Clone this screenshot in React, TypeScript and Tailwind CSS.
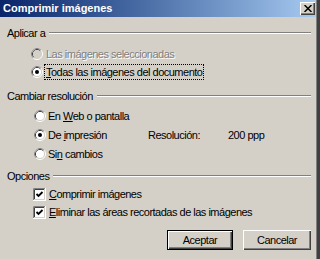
import React from 'react'

const Radio = ({ checked, disabled }: { checked?: boolean; disabled?: boolean }) => (
  <svg width="12" height="12" viewBox="0 0 12 12" className="shrink-0">
    <circle cx="6" cy="6" r="5.5" fill="none" stroke="#ffffff" />
    <path d="M2.11 9.89 A5.5 5.5 0 0 1 9.89 2.11" fill="none" stroke="#808080" />
    <circle cx="6" cy="6" r="4.5" fill="none" stroke="#d4d0c8" />
    <path d="M2.82 9.18 A4.5 4.5 0 0 1 9.18 2.82" fill="none" stroke="#404040" />
    <circle cx="6" cy="6" r="4" fill={disabled ? '#d4d0c8' : '#ffffff'} />
    {checked && <circle cx="6" cy="6" r="2" fill="#000000" />}
  </svg>
)

const Check = () => (
  <svg width="13" height="13" viewBox="0 0 13 13" className="shrink-0">
    <rect x="0" y="0" width="13" height="13" fill="#ffffff" />
    <path d="M0.5 12.5 V0.5 H12.5" fill="none" stroke="#808080" />
    <path d="M1.5 11.5 V1.5 H11.5" fill="none" stroke="#404040" />
    <path d="M12.5 0 V12.5 H0" fill="none" stroke="#ffffff" />
    <path d="M11.5 1 V11.5 H1" fill="none" stroke="#d4d0c8" />
    <path d="M3.5 6 L5.5 8 L9.5 4" fill="none" stroke="#000000" strokeWidth="1.8" />
  </svg>
)

const GroupTitle = ({ label, className }: { label: string; className: string }) => (
  <div className={`flex items-center h-[18px] pl-[7px] ${className}`}>
    <span>{label}</span>
    <div className="flex-1 ml-[4px] border-t border-t-[#808080] border-b border-b-white" />
  </div>
)

const U = ({ children }: { children: React.ReactNode }) => (
  <span className="underline underline-offset-[1px]">{children}</span>
)

export default function App() {
  return (
    <div
      className="w-[320px] h-[259px] flex bg-[#d4d0c8] text-black text-[11px] tracking-[-0.5px] overflow-hidden"
      style={{ fontFamily: '"Liberation Sans", Arial, sans-serif' }}
    >
      <div className="flex-1 flex flex-col">
        {/* title bar */}
        <div className="h-[17px] flex items-center justify-between bg-gradient-to-r from-[#0a246a] to-[#a6caf0]">
          <span className="pl-[3px] text-white font-bold text-[11px] tracking-normal leading-none">Comprimir imágenes</span>
          <div className="mr-[1px] w-[15px] h-[13px] flex items-center justify-center bg-[#d4d0c8] shadow-[inset_1px_1px_0_#ffffff,inset_-1px_-1px_0_#404040,inset_-2px_-2px_0_#808080]">
            <svg width="8" height="7" viewBox="0 0 8 7">
              <path d="M0.5 0 L7.5 7 M7.5 0 L0.5 7" stroke="#000" strokeWidth="1.5" />
            </svg>
          </div>
        </div>

        <div className="flex flex-col pr-[5px]">
          <GroupTitle label="Aplicar a" className="mt-[7px]" />
          <div className="flex items-center h-[18px] mt-[3px] pl-[31px]">
            <Radio disabled />
            <span className="ml-[3px] text-[#808080] [text-shadow:1px_1px_0_#ffffff]">Las imágenes seleccionadas</span>
          </div>
          <div className="flex items-center h-[18px] pl-[31px]">
            <Radio checked />
            <span className="ml-[1px] border border-dotted border-black px-[1px] leading-[14px]">
              <U>T</U>odas las imágenes del documento
            </span>
          </div>

          <GroupTitle label="Cambiar resolución" className="mt-[6px]" />
          <div className="flex items-center h-[18px] mt-[2px] pl-[34px]">
            <Radio />
            <span className="ml-[2px]">En <U>W</U>eb o pantalla</span>
          </div>
          <div className="flex items-center h-[18px] mt-[1px] pl-[34px]">
            <div className="flex items-center w-[114px]">
              <Radio checked />
              <span className="ml-[2px]">De <U>i</U>mpresión</span>
            </div>
            <span className="w-[80px]">Resolución:</span>
            <span>200 ppp</span>
          </div>
          <div className="flex items-center h-[18px] mt-[1px] pl-[34px]">
            <Radio />
            <span className="ml-[2px]">Si<U>n</U> cambios</span>
          </div>

          <GroupTitle label="Opciones" className="mt-[4px]" />
          <div className="flex items-center h-[18px] pl-[33px]">
            <Check />
            <span className="ml-[3px]"><U>C</U>omprimir imágenes</span>
          </div>
          <div className="flex items-center h-[18px] pl-[33px]">
            <Check />
            <span className="ml-[3px]"><U>E</U>liminar las áreas recortadas de las imágenes</span>
          </div>

          <div className="flex justify-end gap-[10px] mt-[9px]">
            <button className="w-[66px] h-[20px] flex items-center justify-center bg-[#d4d0c8] shadow-[inset_0_0_0_1px_#000000,inset_2px_2px_0_#ffffff,inset_-2px_-2px_0_#404040,inset_-3px_-3px_0_#808080]">
              Aceptar
            </button>
            <button className="w-[68px] h-[20px] flex items-center justify-center bg-[#d4d0c8] shadow-[inset_1px_1px_0_#ffffff,inset_-1px_-1px_0_#404040,inset_-2px_-2px_0_#808080]">
              Cancelar
            </button>
          </div>
        </div>
      </div>
      <div className="w-[1px] bg-[#808080]" />
      <div className="w-[3px] bg-[#404040]" />
    </div>
  )
}
